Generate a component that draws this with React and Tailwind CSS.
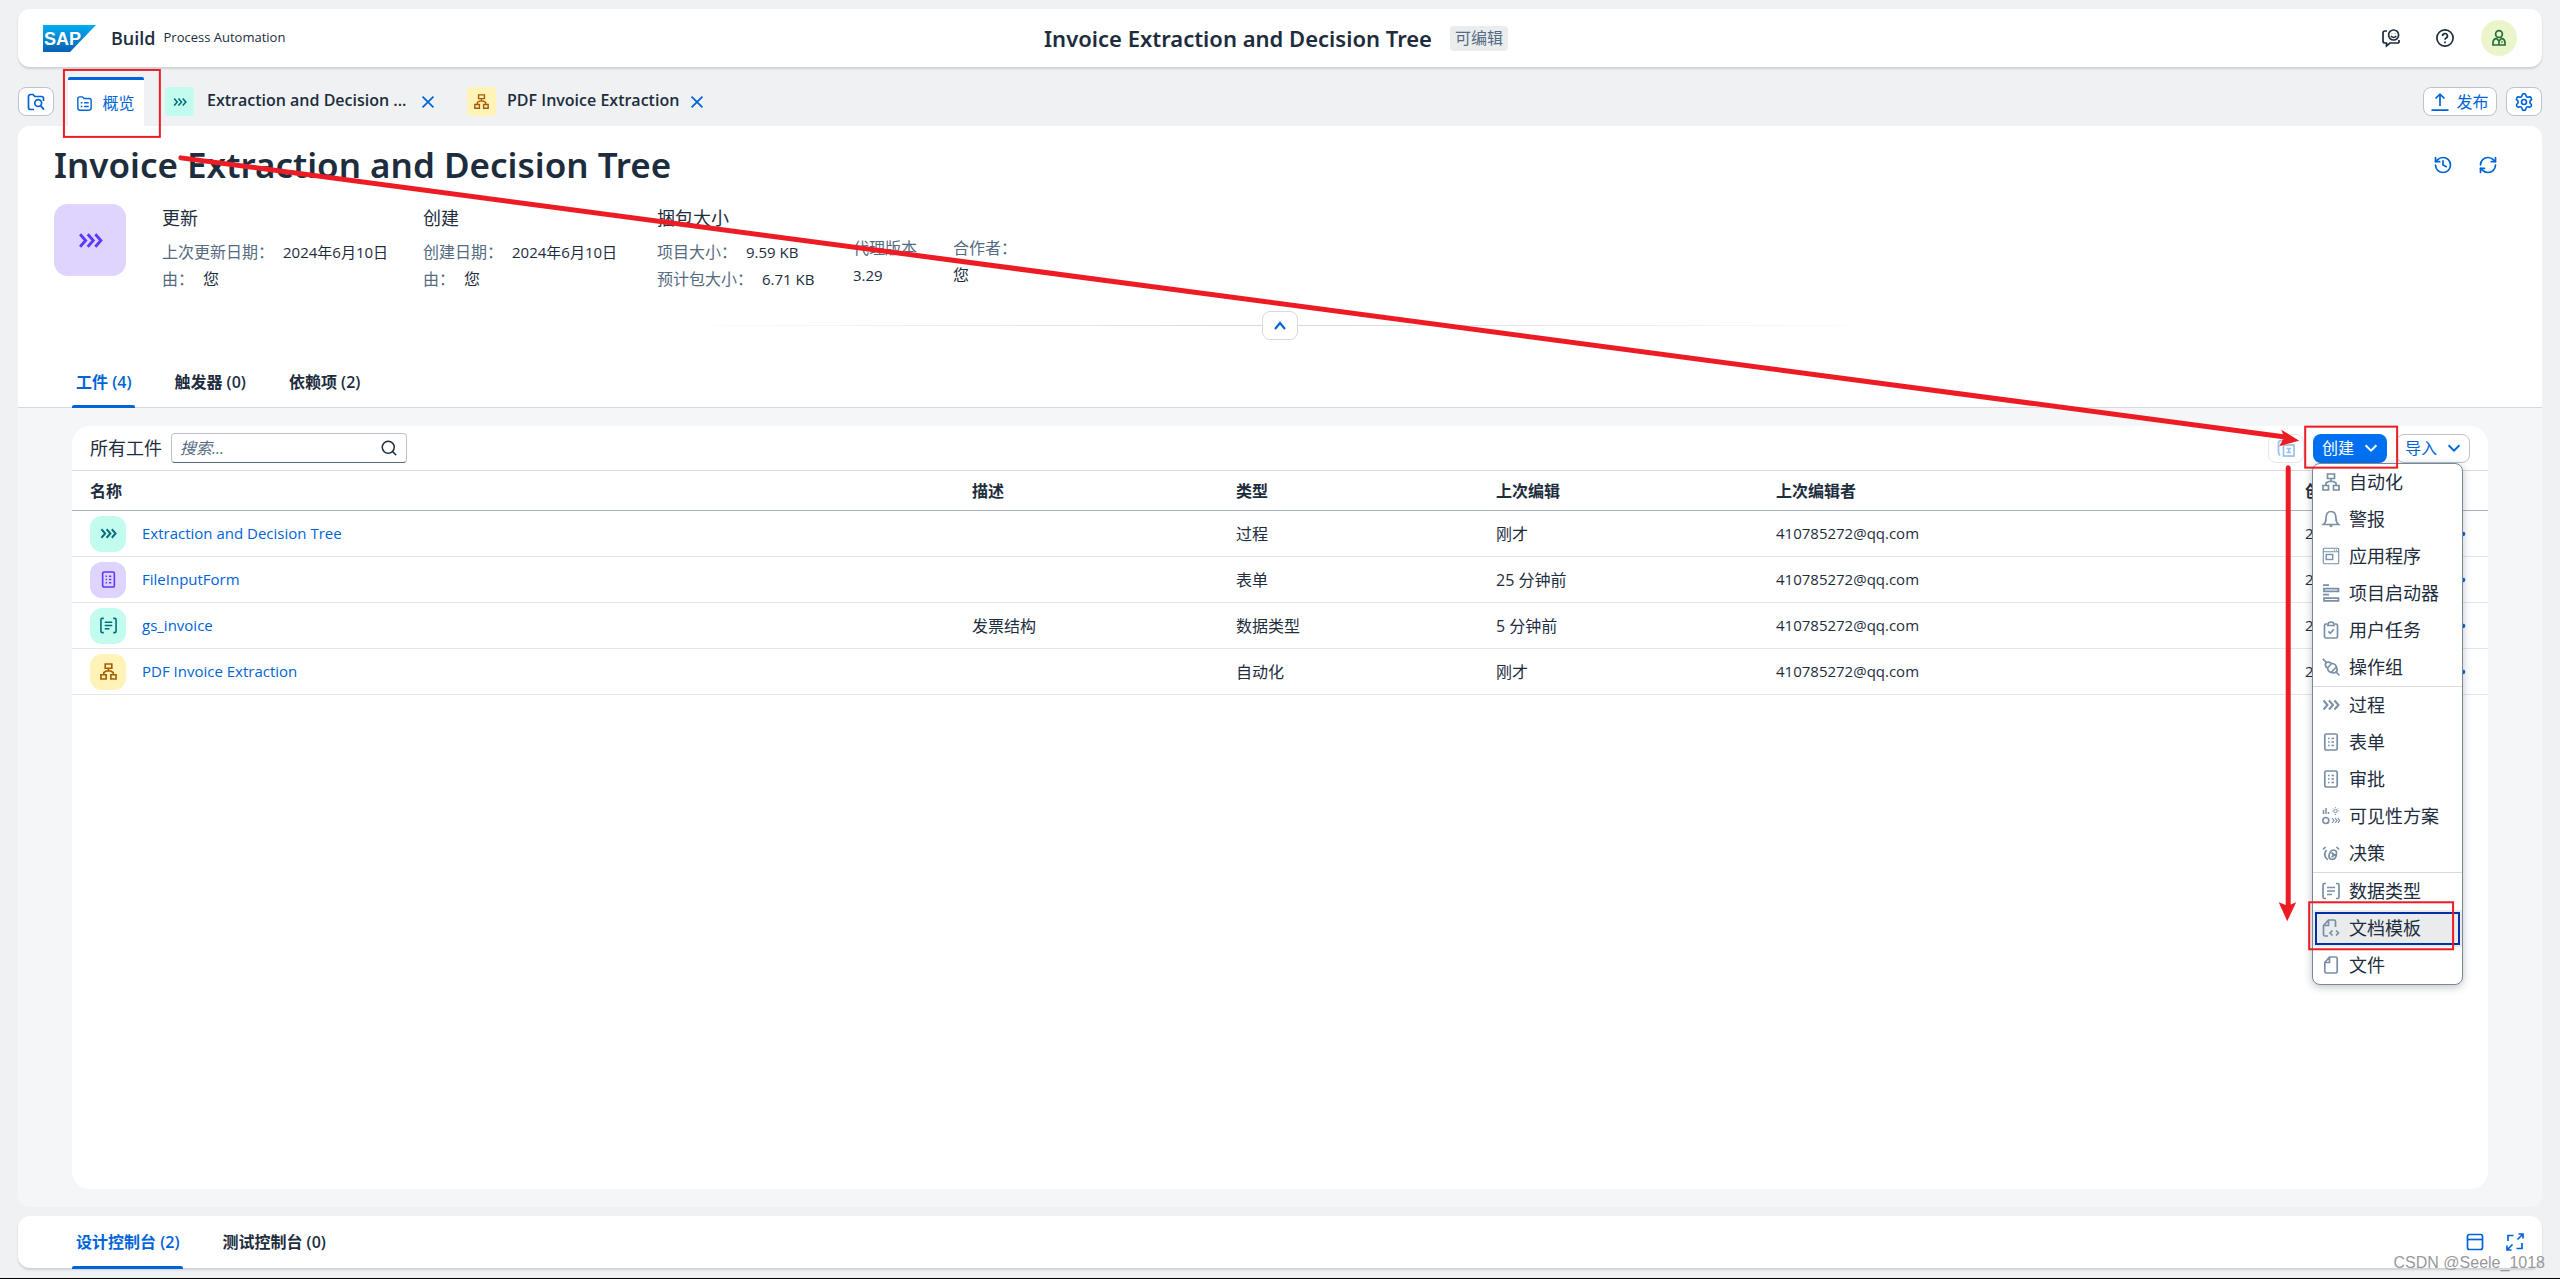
import React, { useState } from "react";
import { History, RefreshCw, Search, Settings } from "lucide-react";

// ── Icons (18px grid) ─────────────────────────────────────────────────────────
const iconShapes = {
  folderSearch: (
    <>
      <path d="M7 16.5H3.5A2 2 0 0 1 1.5 14.5V3.5A2 2 0 0 1 3.5 1.5H6l1.8 2H14.5a2 2 0 0 1 2 2V8" />
      <circle cx="11.2" cy="10" r="3.4" />
      <path d="M13.6 12.6 17 16.6" />
    </>
  ),
  folderList: (
    <>
      <path d="M1 14.5V3.5Q1 1 3.5 1h3L8.500 3H14.500Q17 3 17 5.500v9Q17 17 14.500 17h-11Q1 17 1 14.500Z" />
      <path d="M4.500 8h2M8.500 8h5.500M4.500 12.500h2M8.500 12.500h5.500" />
    </>
  ),
  feedback: (
    <>
      <path d="M5 2H3Q1 2 1 4v8q0 2 2 2h1.5v3L8 14h9" />
      <path d="M17 11v3" />
      <circle cx="11.6" cy="6" r="5" />
      <path d="M9 7q2.6 3 5.2 0M10 4.6v.2M13.2 4.6v.2" />
    </>
  ),
  help: (
    <>
      <circle cx="9" cy="9" r="8.1" />
      <path d="M6.6 7a2.4 2.4 0 1 1 3.6 2Q9 9.7 9 10.8M9 12.600v1.600" />
    </>
  ),
  person: (
    <>
      <circle cx="9" cy="5" r="3.4" />
      <path d="M3 16v-2.2Q3 10 6.5 9.4L9 12l2.500-2.600Q15 10 15 13.800V16ZM9 11v5M11.300 13h1.400" />
    </>
  ),
  upload: <path d="M9 13V1.500M4.500 5.500 9 1.200l4.500 4.300M.5 17.200h17" />,
  chevrons: (
    <path d="M1.500 4.500 5.500 9l-4 4.500M7 4.500 11 9l-4 4.500M12.500 4.500l4 4.500-4 4.500" strokeWidth="2" />
  ),
  flow: (
    <>
      <path d="M5.500 1h7v4.500h-7ZM1 12.500h5.500V17H1ZM11.500 12.500H17V17h-5.500Z" />
      <path d="M9 5.500V8M4 12.500V10l2.500-1.500h5L14 10v2.500" />
    </>
  ),
  form: (
    <>
      <rect x="2.800" y="1" width="12.400" height="16" rx="1.500" />
      <path d="M6 5.500h1.500M9.500 5.500H12M6 9h1.500M9.500 9H12M6 12.500h1.500M9.500 12.500H12" />
    </>
  ),
  brackets: (
    <path d="M4 1.500H2.500Q1 1.500 1 3v12q0 1.500 1.500 1.500H4M14 1.500h1.500Q17 1.500 17 3v12q0 1.500-1.500 1.500H14M5 5.500h8M5 9h8M5 12.500h5" />
  ),
  bell: (
    <>
      <path d="M1.500 14.500Q4 12.500 4 8.500 4 1.500 9 1.500t5 7q0 4 2.500 6Z" />
      <path d="M7.500 15.500q1.500 1.500 3 0" />
    </>
  ),
  appWindow: (
    <>
      <rect x="1.300" y="1.300" width="15.400" height="15.400" rx="1" strokeWidth="1.100" />
      <path d="M1.300 4.800h15.400M12 3.100h1M14 3.100h1" strokeWidth="1.100" />
      <rect x="4.200" y="7.500" width="6.500" height="5" strokeWidth="1.400" />
    </>
  ),
  launcher: (
    <path d="M1 1.200h6M2 4.700h14.500v2.600H2ZM1 10.700h6M2 14.200h14.500v2.600H2Z" />
  ),
  clipboard: (
    <>
      <path d="M5 3H4Q2.500 3 2.500 4.500v11Q2.500 17 4 17h10q1.500 0 1.500-1.500v-11Q15.500 3 14 3h-1" />
      <path d="M6 4.500V3.500Q6 1 9 1t3 2.500v1Z" />
      <path d="m6.300 10.300 2 2 3.500-4" />
    </>
  ),
  plug: (
    <>
      <path d="M.8.800 5 5M13.500 13.500l4 4" />
      <path d="M4 9Q2.500 5.500 4.500 4.500T9.500 5.500L5.500 10Z" />
      <path d="M9.500 5.500Q14 5.500 14.300 9.500M5.500 10q.5 4 4 4.500M9 14.500l5.500-5.500q1.500 4-.5 5.200T9 14.500Z" />
    </>
  ),
  visibility: (
    <>
      <path d="M1.500 3v4M4 1v6M6.500 5v2" strokeWidth="1.500" />
      <circle cx="3.800" cy="13.500" r="3" />
      <circle cx="13.500" cy="4" r="1.700" strokeWidth="1" />
      <path d="M13.500 0v.8M9.800 4h.8M16.500 4h.8M11 1.400l.5.500M16 1.400l-.5.500M12.800 7.500h1.400" strokeWidth="1" />
      <path d="m10 11 2 2.500-2 2.500M13 11l2 2.500-2 2.500M16 11l1.500 2.500L16 16" strokeWidth="1.200" />
    </>
  ),
  decision: (
    <>
      <path d="M1 5.500 3.500 3M17 5.500 14.500 3M4.500 6Q2 9 3 12t3 3.500" />
      <path d="M14.500 10.500q-1 5-4.500 5-3.500-.5-3-4Q8 6 11.500 6q3.500.5 3 3.500-1 3-4 .5M9.500 8.500l3 2.500-3 2" />
    </>
  ),
  docCode: (
    <>
      <path d="M6 17H3q-1.500 0-1.500-1.500V6.500L6.500 1H12q1.500 0 1.500 1.500V8M1.500 6.500h5V1" />
      <path d="m10.500 11.500-2.500 2.500 2.500 2.500M14 11.500l2.500 2.500-2.500 2.500" />
    </>
  ),
  doc: (
    <path d="M2.800 6.500 7.500 1h6.200q1.500 0 1.500 1.500v13q0 1.500-1.500 1.500H4.300q-1.500 0-1.500-1.500ZM3 6.500h4.500V1" />
  ),
  copy: (
    <>
      <path d="M3 16.500Q1.500 15 1.500 13V4q0-2.500 3-2.500H10" />
      <rect x="6.500" y="6" width="10.500" height="11" />
      <path d="M9.500 9.500h4.500M9.500 13.500h4.500M11.800 9.500v4" />
    </>
  ),
  cross: <path d="m2 2 14 14M16 2 2 16" strokeWidth="2.200" />,
  chevronDown: <path d="m2 5.500 7 7 7-7" strokeWidth="2.400" />,
  chevronUp: <path d="m4 12 5-6 5 6" strokeWidth="2.200" />,
  dots: (
    <>
      <circle cx="1.800" cy="9" r="1.300" fill="currentColor" />
      <circle cx="9" cy="9" r="1.300" fill="currentColor" />
      <circle cx="16.200" cy="9" r="1.300" fill="currentColor" />
    </>
  ),
  panel: (
    <>
      <rect x="1.500" y="1.500" width="15" height="15" rx="2" />
      <path d="M1.500 6.500h15" />
    </>
  ),
  expand: (
    <path d="M2 8V2.500h5.500M16 10v5.500h-5.500M11.500 6.500 17 1M12.500 1H17v4.500M6.500 11.500 1 17M1 12.500V17h4.500" />
  ),
};

const Icon = ({ name, className = "size-[18px]" }) => (
  <svg viewBox="0 0 18 18" fill="none" stroke="currentColor" strokeWidth="1.7" className={`shrink-0 overflow-visible ${className}`} aria-hidden="true">
    {iconShapes[name]}
  </svg>
);

// ── Data ──────────────────────────────────────────────────────────────────────
const rows = [
  { name: "Extraction and Decision Tree", icon: "chevrons", tile: "bg-[#c2fcee] text-[#046c7a]", desc: "", type: "过程", edited: "刚才" },
  { name: "FileInputForm", icon: "form", tile: "bg-[#dfd4fe] text-[#5d36ff]", desc: "", type: "表单", edited: "25 分钟前" },
  { name: "gs_invoice", icon: "brackets", tile: "bg-[#c2fcee] text-[#046c7a]", desc: "发票结构", type: "数据类型", edited: "5 分钟前" },
  { name: "PDF Invoice Extraction", icon: "flow", tile: "bg-[#fff3b8] text-[#a45d00]", desc: "", type: "自动化", edited: "刚才" },
];

const menuGroups = [
  [
    ["flow", "自动化"],
    ["bell", "警报"],
    ["appWindow", "应用程序"],
    ["launcher", "项目启动器"],
    ["clipboard", "用户任务"],
    ["plug", "操作组"],
  ],
  [
    ["chevrons", "过程"],
    ["form", "表单"],
    ["form", "审批"],
    ["visibility", "可见性方案"],
    ["decision", "决策"],
  ],
  [
    ["brackets", "数据类型"],
    ["docCode", "文档模板"],
    ["doc", "文件"],
  ],
];

const outlineButton = "h-[29px] bg-white border border-[#bcc3ca] rounded-lg text-[#0064d9] flex items-center justify-center";

// ── Header ────────────────────────────────────────────────────────────────────
const SapLogo = () => (
  <svg viewBox="0 0 53 27" className="w-[53px] h-[27px]" role="img" aria-label="SAP">
    <defs>
      <linearGradient id="sap" x1="0" y1="0" x2="0" y2="1">
        <stop offset="0" stopColor="#00aeef" />
        <stop offset="1" stopColor="#0a5fb4" />
      </linearGradient>
    </defs>
    <path d="M0 0h53L27 27H0Z" fill="url(#sap)" />
    <text x="1" y="20" fill="#fff" fontFamily="Liberation Sans, sans-serif" fontWeight="700" fontSize="18">SAP</text>
  </svg>
);

const Header = () => (
  <header className="h-[58px] bg-white rounded-xl shadow-[0_2px_2px_#ccd2d8] grid grid-cols-[1fr_auto_1fr] items-center px-[25px]">
    <div className="flex items-center">
      <SapLogo />
      <span className="ml-[15px] text-lg font-semibold">Build</span>
      <span className="ml-[8px] text-[13px]">Process Automation</span>
    </div>
    <div className="flex items-center gap-[18px] pr-2">
      <span className="font-['Noto_Sans'] text-[22px] leading-6 font-semibold">Invoice Extraction and Decision Tree</span>
      <span className="h-[25px] px-[5px] rounded bg-[#eaecee] text-[#556b82] text-base leading-[25px]">可编辑</span>
    </div>
    <div className="flex items-center justify-end gap-[18px]">
      <button aria-label="反馈" className="size-9 flex items-center justify-center"><Icon name="feedback" /></button>
      <button aria-label="帮助" className="size-9 flex items-center justify-center"><Icon name="help" /></button>
      <button aria-label="用户" className="size-9 flex items-center justify-center rounded-full bg-[#ebf5cb] text-[#256f3a]"><Icon name="person" /></button>
    </div>
  </header>
);

// ── Editor tabs ───────────────────────────────────────────────────────────────
const EditorTabs = () => (
  <div className="h-[59px] flex items-end">
    <button aria-label="搜索项目" className={`${outlineButton} w-9 mb-[10px]`}><Icon name="folderSearch" /></button>
    <button className="ml-[14px] w-[76px] h-[49px] bg-white border-t-[3px] border-[#0064d9] rounded-t-xs text-[#0064d9] flex items-center justify-center gap-[10px]">
      <Icon name="folderList" className="size-[15px]" />
      <span className="text-base">概览</span>
    </button>
    <div className="ml-[21px] mb-[10px] h-[29px] flex items-center gap-[13px]">
      <span className="size-[29px] rounded bg-[#c2fcee] text-[#046c7a] flex items-center justify-center"><Icon name="chevrons" className="size-[14px]" /></span>
      <span className="w-[201px] text-base leading-[27px] h-[29px] font-semibold">Extraction and Decision ...</span>
      <button aria-label="关闭 Extraction and Decision Tree" className="text-[#0064d9]"><Icon name="cross" className="size-[14px]" /></button>
    </div>
    <div className="ml-[32px] mb-[10px] h-[29px] flex items-center gap-[11px]">
      <span className="size-[29px] rounded bg-[#fff3b8] text-[#a45d00] flex items-center justify-center"><Icon name="flow" className="size-[15px]" /></span>
      <span className="text-base leading-[27px] h-[29px] font-semibold">PDF Invoice Extraction</span>
      <button aria-label="关闭 PDF Invoice Extraction" className="text-[#0064d9]"><Icon name="cross" className="size-[14px]" /></button>
    </div>
    <div className="ml-auto mb-[10px] flex gap-[9px]">
      <button className={`${outlineButton} w-[74px] gap-[7px] text-base`}>
        <Icon name="upload" />
        发布
      </button>
      <button aria-label="设置" className={`${outlineButton} w-9`}><Settings className="size-[20px]" /></button>
    </div>
  </div>
);

// ── Project overview ──────────────────────────────────────────────────────────
const Fact = ({ label, value, small }) => (
  <div className="flex gap-[9px] leading-[27px] text-base whitespace-nowrap">
    <dt className="text-[#556b82]">{label}</dt>
    <dd className={small ? "text-[15px] leading-[27px]" : ""}>{value}</dd>
  </div>
);

const Facts = ({ title, className, children }) => (
  <div className={className}>
    <h2 className="text-lg leading-[29px] mb-[6px]">{title}</h2>
    <dl>{children}</dl>
  </div>
);

const Tab = ({ active, onClick, className, children }) => (
  <button
    role="tab"
    aria-selected={active}
    onClick={onClick}
    className={`relative font-semibold text-base ${className} ${active ? "text-[#0064d9] after:absolute after:inset-x-0 after:bottom-0 after:h-[3px] after:rounded-t-xs after:bg-[#0064d9]" : ""}`}
  >
    {children}
  </button>
);

const Overview = ({ tab, setTab }) => (
  <section className="bg-white rounded-t-xl border-b border-[#d9d9d9] pt-[18px]">
    <div className="h-[42px] pl-[36px] pr-[44px] flex items-center">
      <h1 className="flex-1 font-['Noto_Sans'] text-[35px] leading-10 font-semibold">Invoice Extraction and Decision Tree</h1>
      <div className="flex gap-[25px] text-[#0064d9]">
        <button aria-label="历史记录"><History className="size-[20px]" /></button>
        <button aria-label="刷新"><RefreshCw className="size-[20px]" /></button>
      </div>
    </div>

    <div className="mt-[18px] pl-[36px] flex gap-[36px]">
      <div className="size-[72px] rounded-[14px] bg-[#dfd4fe] text-[#5d36ff] flex items-center justify-center">
        <Icon name="chevrons" className="size-[25px]" />
      </div>
      <Facts title="更新" className="w-[225px]">
        <Fact label="上次更新日期：" value="2024年6月10日" small />
        <Fact label="由：" value="您" />
      </Facts>
      <Facts title="创建" className="w-[198px]">
        <Fact label="创建日期：" value="2024年6月10日" small />
        <Fact label="由：" value="您" />
      </Facts>
      <Facts title="捆包大小" className="w-[160px]">
        <Fact label="项目大小：" value="9.59 KB" small />
        <Fact label="预计包大小：" value="6.71 KB" small />
      </Facts>
      <dl className="w-[64px] mt-[31px] text-base leading-[27px]">
        <dt className="text-[#556b82]">代理版本</dt>
        <dd className="text-[15px] leading-[27px]">3.29</dd>
      </dl>
      <dl className="mt-[31px] text-base leading-[27px]">
        <dt className="text-[#556b82]">合作者：</dt>
        <dd>您</dd>
      </dl>
    </div>

    <div className="mt-[18px] flex items-center justify-center">
      <span className="w-[24%] h-px bg-linear-to-l from-[#d9d9d9] to-transparent" />
      <button aria-label="折叠标题" className="w-9 h-[29px] bg-white border border-[#d9d9d9] rounded-lg text-[#0064d9] flex items-center justify-center">
        <Icon name="chevronUp" className="size-[18px]" />
      </button>
      <span className="w-[24%] h-px bg-linear-to-r from-[#d9d9d9] to-transparent" />
    </div>

    <div role="tablist" className="mt-[16px] pl-[54px] flex gap-[35px]">
      {["工件 (4)", "触发器 (0)", "依赖项 (2)"].map((label) => (
        <Tab key={label} active={tab === label} onClick={() => setTab(label)} className="h-[52px] -mb-px px-1">
          {label}
        </Tab>
      ))}
    </div>
  </section>
);

// ── Artifacts ─────────────────────────────────────────────────────────────────
const CreateMenu = () => (
  <ul role="menu" className="absolute z-10 top-full -left-px w-[151px] bg-white border border-[#7b8794] rounded-lg overflow-hidden shadow-[0_2px_8px_rgba(34,53,72,0.3)]">
    {menuGroups.map((group, i) => (
      <li key={i} role="none" className={i > 0 ? "border-t border-[#d9d9d9]" : ""}>
        {group.map(([icon, label]) => {
          const selected = label === "文档模板";
          return (
            <button
              key={label}
              role="menuitem"
              className={`w-full h-[37px] flex items-center gap-[9px] pl-[9px] text-lg text-left ${selected ? "bg-[#e9ebec] outline-2 -outline-offset-4 outline-[#0032a5]" : ""}`}
            >
              <Icon name={icon} className="size-[18px] text-[#788fa6]" />
              {label}
            </button>
          );
        })}
      </li>
    ))}
  </ul>
);

const Artifacts = () => {
  const [query, setQuery] = useState("");
  const [menuOpen, setMenuOpen] = useState(true);

  return (
    <section className="flex-1 mx-[54px] my-[18px] bg-white rounded-[18px]">
      <div className="h-[45px] border-b border-[#d9d9d9] px-[18px] flex items-center gap-[9px]">
        <label htmlFor="search" className="text-lg">所有工件</label>
        <div className="w-[236px] h-[30px] border border-[#bcc3ca] border-b-[#556b81] rounded flex items-center px-[8px]">
          <input
            id="search"
            value={query}
            onChange={(e) => setQuery(e.target.value)}
            placeholder="搜索..."
            className="flex-1 min-w-0 h-full text-base outline-none placeholder:italic placeholder:text-[#556b82]"
          />
          <Search className="size-[18px]" />
        </div>
        <div className="ml-auto flex gap-[9px]">
          <button aria-label="复制" disabled className={`${outlineButton} w-9 opacity-40`}><Icon name="copy" /></button>
          <div className="relative">
            <button
              aria-expanded={menuOpen}
              onClick={() => setMenuOpen(!menuOpen)}
              className="w-[74px] h-[29px] rounded-lg bg-[#0070f2] text-white text-base flex items-center justify-center gap-[10px]"
            >
              创建
              <Icon name="chevronDown" className="size-[14px]" />
            </button>
            {menuOpen && <CreateMenu />}
          </div>
          <button className={`${outlineButton} w-[74px] gap-[10px] text-base`}>
            导入
            <Icon name="chevronDown" className="size-[14px]" />
          </button>
        </div>
      </div>

      <table className="w-full table-fixed border-separate border-spacing-0 text-left">
        <thead>
          <tr className="text-base *:h-[40px] *:font-bold *:border-b *:border-[#a8b3bd]">
            <th className="pl-[18px]">名称</th>
            <th className="w-[264px]">描述</th>
            <th className="w-[260px]">类型</th>
            <th className="w-[280px]">上次编辑</th>
            <th className="w-[529px]">上次编辑者</th>
            <th className="w-[119px]">创建</th>
            <th className="w-[64px]"></th>
          </tr>
        </thead>
        <tbody>
          {rows.map((row) => (
            <tr key={row.name} className="*:h-[46px] *:border-b *:border-[#e5e5e5]">
              <td className="pl-[18px]">
                <div className="flex items-center gap-4">
                  <span className={`size-9 rounded-xl flex items-center justify-center ${row.tile}`}>
                    <Icon name={row.icon} className="size-[17px]" />
                  </span>
                  <a href="#" className="text-[15px] text-[#0064d9]">{row.name}</a>
                </div>
              </td>
              <td className="text-base">{row.desc}</td>
              <td className="text-base">{row.type}</td>
              <td className="text-base">{row.edited}</td>
              <td className="text-[15px]">410785272@qq.com</td>
              <td className="text-[15px] whitespace-nowrap">2024年6月10日</td>
              <td>
                <button aria-label="更多" className="w-full flex justify-center text-[#0064d9]"><Icon name="dots" /></button>
              </td>
            </tr>
          ))}
        </tbody>
      </table>
    </section>
  );
};

// ── Console bar ───────────────────────────────────────────────────────────────
const ConsoleBar = ({ tab, setTab }) => (
  <footer className="mt-[9px] mb-[10px] h-[52px] bg-white rounded-xl shadow-[0_2px_2px_#ccd2d8] pl-[54px] pr-[18px] flex items-center">
    <div role="tablist" className="flex gap-[35px]">
      {["设计控制台 (2)", "测试控制台 (0)"].map((label) => (
        <Tab key={label} active={tab === label} onClick={() => setTab(label)} className="h-[53px] px-1">
          {label}
        </Tab>
      ))}
    </div>
    <div className="ml-auto flex gap-[22px] text-[#0064d9]">
      <button aria-label="停靠"><Icon name="panel" /></button>
      <button aria-label="全屏"><Icon name="expand" /></button>
    </div>
  </footer>
);

// Red frames and arrows that walk the reader through the steps
const Annotations = () => (
  <svg viewBox="0 0 2560 1279" className="absolute inset-0 z-20 w-full h-full pointer-events-none" fill="none" stroke="#ed1c24" aria-hidden="true">
    <g strokeWidth="2">
      <rect x="63" y="70" width="96" height="67" />
      <rect x="2306" y="427" width="92" height="41" />
      <rect x="2310" y="903" width="144" height="47" />
    </g>
    <g strokeWidth="5" strokeLinecap="round">
      <path d="M180 158 2284 437" />
      <path d="M2289 468V906" />
    </g>
    <g fill="#ed1c24" stroke="none">
      <path d="m2300 441-18-11 3 7.500-5 9Z" />
      <path d="m2288 922-8.500-19 9 3.500 8.500-3.500Z" />
    </g>
  </svg>
);

const App = () => {
  const [tab, setTab] = useState("工件 (4)");
  const [consoleTab, setConsoleTab] = useState("设计控制台 (2)");

  return (
    <div className="relative min-h-screen flex flex-col px-[18px] pt-[9px] bg-[#eff1f2] border-b border-black text-[#1d2d3e] font-['Open_Sans','Noto_Sans_CJK_SC',sans-serif]">
      <Header />
      <EditorTabs />
      <main className="flex-1 flex flex-col bg-[#f5f6f7] rounded-xl">
        <Overview tab={tab} setTab={setTab} />
        <Artifacts />
      </main>
      <ConsoleBar tab={consoleTab} setTab={setConsoleTab} />
      <Annotations />
      <span className="absolute right-[15px] bottom-[5px] z-20 font-['Liberation_Sans'] text-base leading-5 text-[#999999]">CSDN @Seele_1018</span>
    </div>
  );
};

export default App;
